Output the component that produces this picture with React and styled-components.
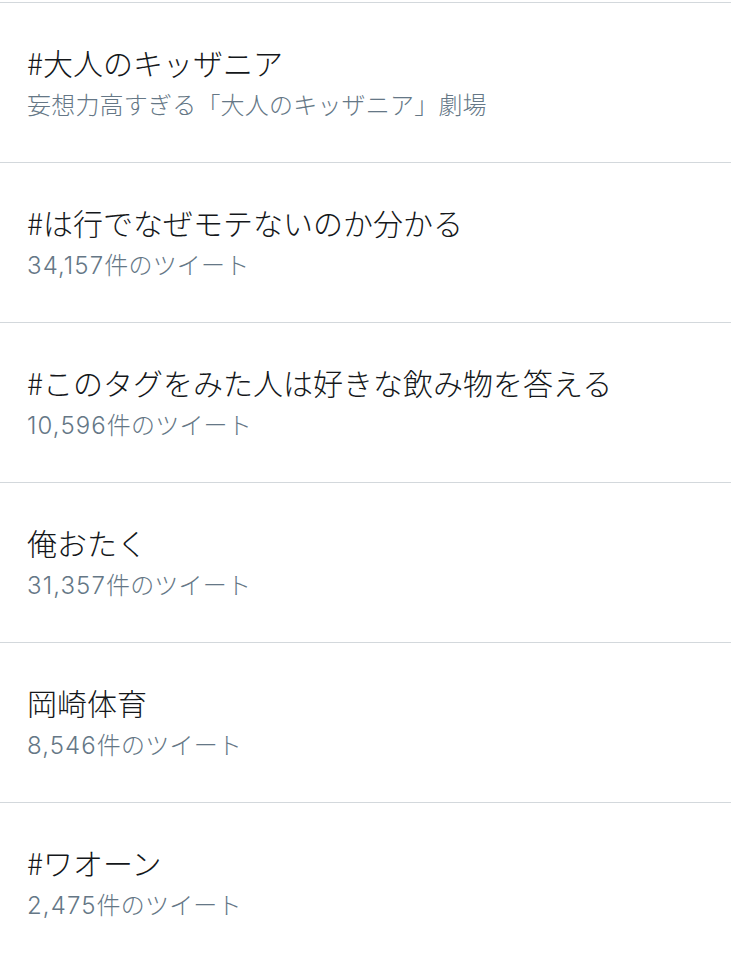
import styled, { createGlobalStyle } from "styled-components";

const trends = [
  { name: "#大人のキッザニア", desc: "妄想力高すぎる「大人のキッザニア」劇場" },
  { name: "#は行でなぜモテないのか分かる", count: "34,157" },
  { name: "#このタグをみた人は好きな飲み物を答える", count: "10,596" },
  { name: "俺おたく", count: "31,357" },
  { name: "岡崎体育", count: "8,546" },
  { name: "#ワオーン", count: "2,475" },
];

const Global = createGlobalStyle`
  body {
    margin: 0;
    background: #fff;
    font-family: "Noto Sans CJK JP", "Noto Sans", sans-serif;
  }
`;

const List = styled.div`
  padding-top: 2px;
  background: #fff;
`;

const Row = styled.div`
  height: 160px;
  box-sizing: border-box;
  border-top: 1px solid #d3d8dc;
  padding: 40px 27px 0;
  display: flex;
  flex-direction: column;
`;

const Name = styled.div`
  font-size: 30px;
  line-height: 38px;
  font-weight: 300;
  color: #14171a;
  white-space: nowrap;
`;

const Meta = styled.div`
  margin-top: 7px;
  font-size: 24px;
  line-height: 32px;
  font-weight: 300;
  color: #657786;
  white-space: nowrap;
  letter-spacing: 0.2px;
`;

const Count = styled.span`
  font-family: "Inter", "Noto Sans CJK JP", sans-serif;
  font-weight: 300;
  letter-spacing: 1.1px;
`;

export default function App() {
  return (
    <>
      <Global />
      <List>
        {trends.map((t) => (
          <Row key={t.name}>
            <Name>{t.name}</Name>
            <Meta>
              {t.count ? (
                <>
                  <Count>{t.count}</Count>件のツイート
                </>
              ) : (
                t.desc
              )}
            </Meta>
          </Row>
        ))}
      </List>
    </>
  );
}
